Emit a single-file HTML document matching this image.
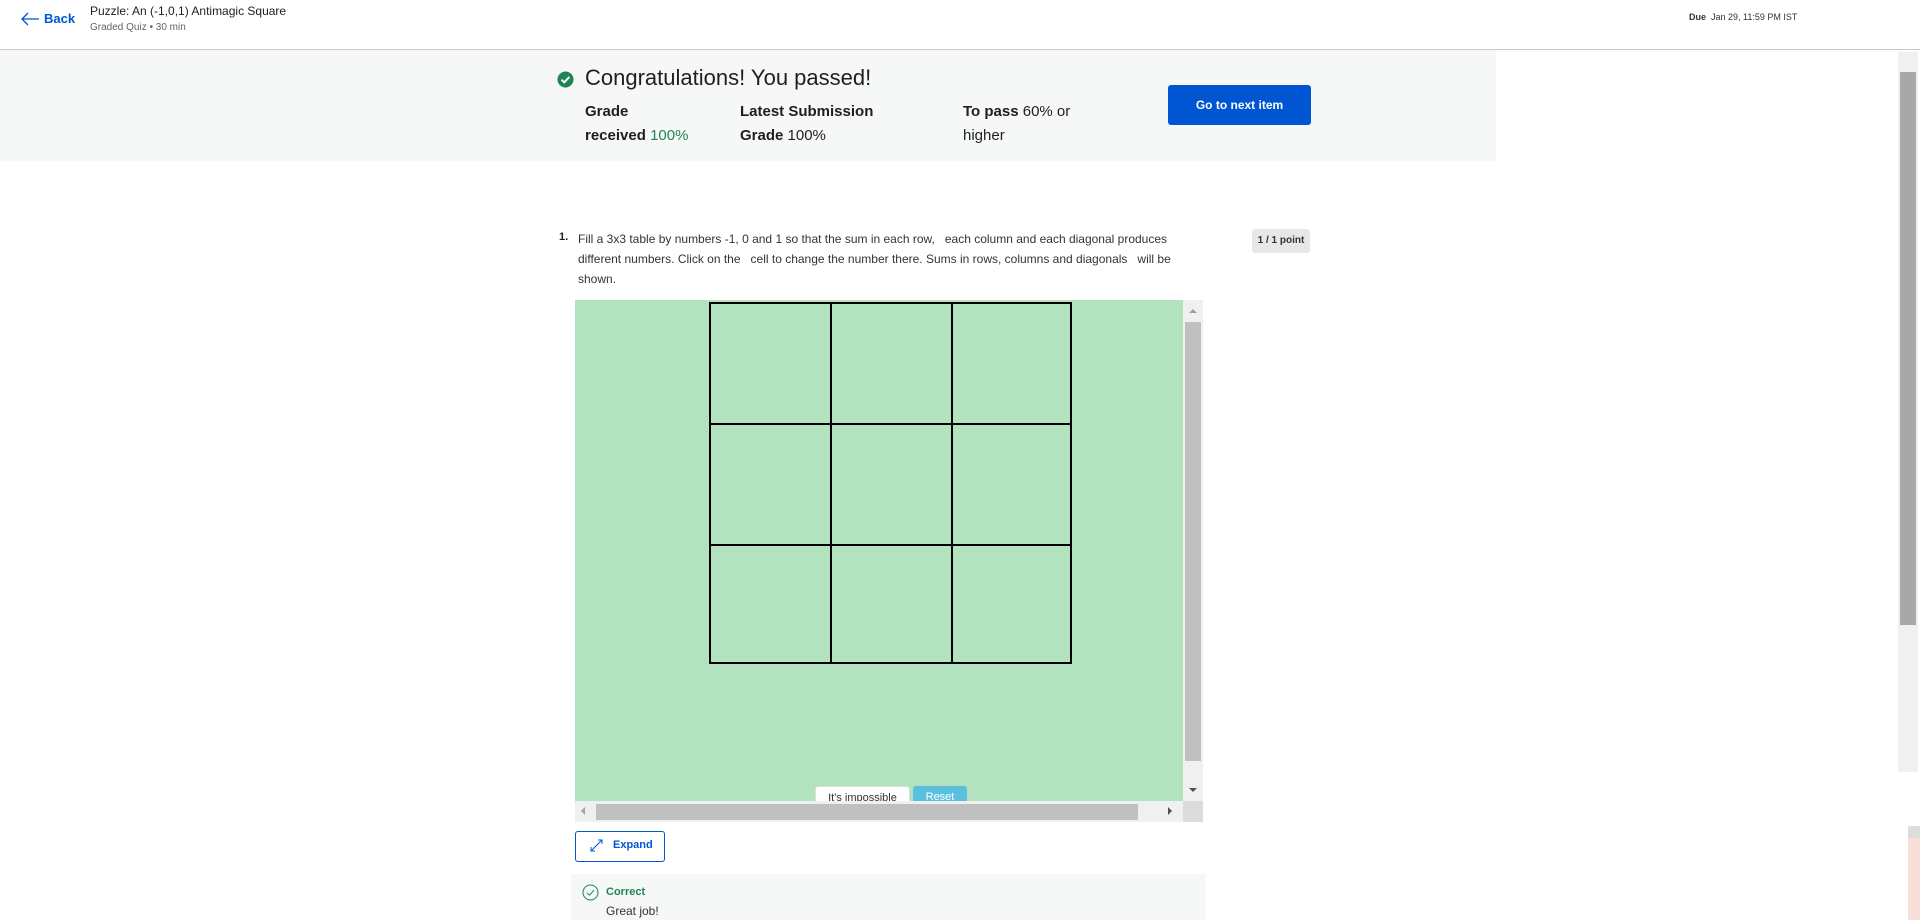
<!DOCTYPE html>
<html><head><meta charset="utf-8"><style>
*{margin:0;padding:0;box-sizing:border-box}
body{width:1920px;height:920px;overflow:hidden;background:#fff;font-family:"Liberation Sans",sans-serif;color:#1f1f1f;position:relative}
.a{position:absolute;white-space:nowrap}
</style></head><body>
<svg class="a" style="left:20px;top:11px" width="20" height="16" viewBox="0 0 20 16"><path d="M19 8H2M8 2L2 8l6 6" stroke="#0056d2" stroke-width="1.3" fill="none"/></svg>
<div class="a" style="left:44px;top:11px;font-size:13px;font-weight:bold;color:#0056d2">Back</div>
<div class="a" style="left:90px;top:4px;font-size:12px;color:#1f1f1f">Puzzle: An (-1,0,1) Antimagic Square</div>
<div class="a" style="left:90px;top:22px;font-size:10px;color:#636363">Graded Quiz • 30 min</div>
<div class="a" style="left:1689px;top:12px;font-size:9px;color:#333"><b>Due</b>&nbsp; Jan 29, 11:59 PM IST</div>
<div class="a" style="left:0;top:49px;width:1920px;height:1px;background:#c8c8c8"></div>
<div class="a" style="left:0;top:50px;width:1496px;height:111px;background:#f5f8f7"></div>
<svg class="a" style="left:557px;top:71px" width="17" height="17" viewBox="0 0 17 17"><circle cx="8.5" cy="8.5" r="8" fill="#1f8354"/><path d="M4.5 8.7l2.7 2.6 5.2-5.4" stroke="#fff" stroke-width="2" fill="none"/></svg>
<div class="a" style="left:585px;top:65px;font-size:22px;color:#1f1f1f">Congratulations! You passed!</div>
<div class="a" style="left:585px;top:100px;font-size:15px;line-height:24px"><b>Grade</b><br><b>received</b> <span style="color:#1f8354">100%</span></div>
<div class="a" style="left:740px;top:100px;font-size:15px;line-height:24px"><b>Latest Submission</b><br><b>Grade</b> 100%</div>
<div class="a" style="left:963px;top:100px;font-size:15px;line-height:24px"><b>To pass</b> 60% or<br>higher</div>
<div class="a" style="left:1168px;top:85px;width:143px;height:40px;background:#0056d2;border-radius:3px;color:#fff;font-size:12px;font-weight:bold;text-align:center;line-height:40px">Go to next item</div>
<div class="a" style="left:559px;top:231px;font-size:11px;font-weight:bold">1.</div>
<div class="a" style="left:578px;top:229px;font-size:12px;line-height:20px;color:#333">Fill a 3x3 table by numbers -1, 0 and 1 so that the sum in each row,&nbsp;&nbsp; each column and each diagonal produces<br>different numbers. Click on the&nbsp;&nbsp; cell to change the number there. Sums in rows, columns and diagonals&nbsp;&nbsp; will be<br>shown.</div>
<div class="a" style="left:1252px;top:229px;width:58px;height:24px;background:#e5e7e8;border-radius:3px;font-size:10px;font-weight:bold;text-align:center;line-height:24px;color:#333">1 / 1 point</div>
<div class="a" style="left:575px;top:300px;width:608px;height:501px;background:#b2e2be;overflow:hidden">
<div class="a" style="left:134px;top:2px;width:363px;height:362px;border:2px solid #000;background:
linear-gradient(#000,#000) 119px 0/2px 100% no-repeat,linear-gradient(#000,#000) 240px 0/2px 100% no-repeat,linear-gradient(#000,#000) 0 119px/100% 2px no-repeat,linear-gradient(#000,#000) 0 240px/100% 2px no-repeat"></div>
<div class="a" style="left:240px;top:486px;width:95px;height:24px;background:#fff;border:1px solid #ddd;border-radius:3px;font-size:11px;text-align:center;line-height:22px;color:#333">It's impossible</div>
<div class="a" style="left:338px;top:486px;width:54px;height:24px;background:#5bc0de;border-radius:3px;font-size:11px;text-align:center;line-height:22px;color:#fff">Reset</div>
</div>
<div class="a" style="left:1183px;top:300px;width:20px;height:501px;background:#f0f0f0"><div class="a" style="left:2px;top:22px;width:16px;height:439px;background:#c0c0c0"></div><div class="a" style="left:6px;top:9px;border:4px solid transparent;border-bottom-color:#a0a0a0;border-top:0"></div><div class="a" style="left:6px;top:488px;border:4px solid transparent;border-top-color:#505050;border-bottom:0"></div></div>
<div class="a" style="left:575px;top:801px;width:608px;height:21px;background:#f0f0f0"><div class="a" style="left:21px;top:3px;width:542px;height:16px;background:#c0c0c0"></div><div class="a" style="left:6px;top:6px;border:4px solid transparent;border-right-color:#a0a0a0;border-left:0"></div><div class="a" style="left:593px;top:6px;border:4px solid transparent;border-left-color:#505050;border-right:0"></div></div>
<div class="a" style="left:1183px;top:801px;width:20px;height:21px;background:#dcdcdc"></div>
<div class="a" style="left:575px;top:831px;width:90px;height:31px;border:1px solid #0056d2;border-radius:3px"></div>
<svg class="a" style="left:589px;top:838px" width="15" height="15" viewBox="0 0 15 15"><path d="M2 13L13 2M9 2h4v4M2 9v4h4" stroke="#0056d2" stroke-width="1" fill="none"/></svg>
<div class="a" style="left:613px;top:839px;font-size:11px;font-weight:bold;color:#0056d2">Expand</div>
<div class="a" style="left:571px;top:874px;width:635px;height:46px;background:#f5f8f7"></div>
<svg class="a" style="left:582px;top:884px" width="17" height="17" viewBox="0 0 17 17"><circle cx="8.5" cy="8.5" r="7.5" stroke="#1f8354" fill="none"/><path d="M5 8.7l2.5 2.5 4.5-5" stroke="#1f8354" fill="none"/></svg>
<div class="a" style="left:606px;top:886px;font-size:11px;font-weight:bold;color:#1f8354">Correct</div>
<div class="a" style="left:606px;top:904px;font-size:12px;color:#333">Great job!</div>
<div class="a" style="left:1898px;top:52px;width:20px;height:720px;background:#f0f0f0"><div class="a" style="left:2px;top:20px;width:16px;height:553px;background:#a8a8a8"></div></div>
<div class="a" style="left:1908px;top:826px;width:12px;height:12px;background:#ddd"></div>
<div class="a" style="left:1908px;top:838px;width:12px;height:82px;background:#f7e0da"></div>
</body></html>
